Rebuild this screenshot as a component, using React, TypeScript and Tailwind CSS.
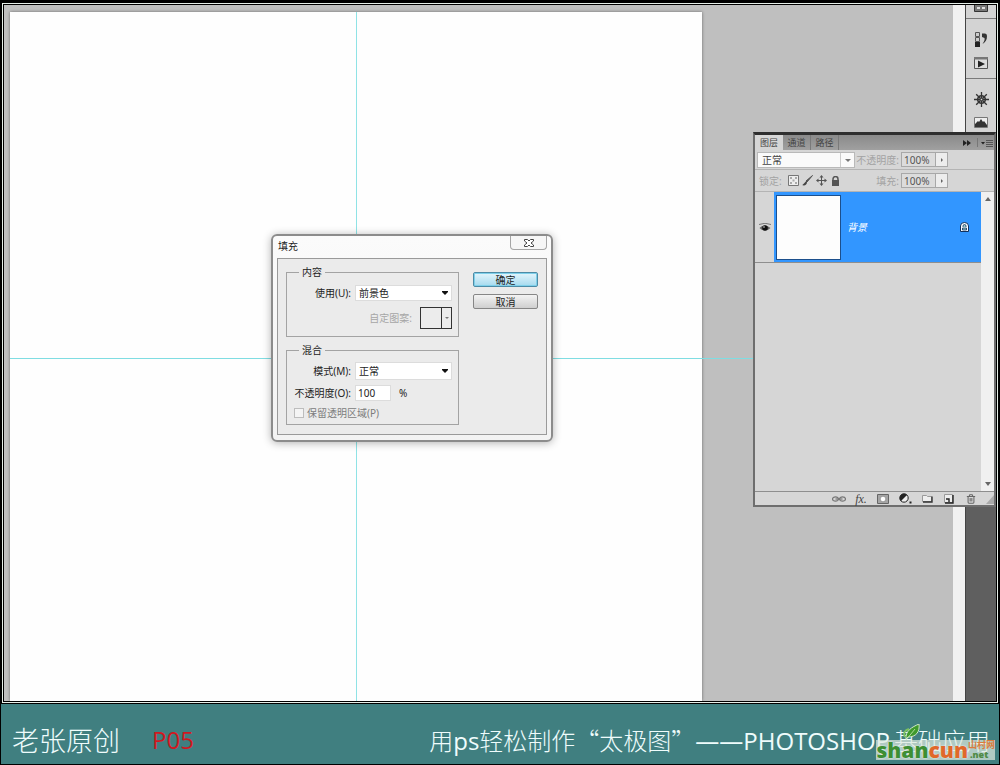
import React, { useState } from "react";
import { Trash2 } from "lucide-react";

const UI_FONT = "font-['Noto_Sans','Noto_Sans_CJK_SC',sans-serif]";

type SelectProps = {
  id: string;
  value: string;
  options: string[];
  className: string;
  onChange: (v: string) => void;
};

function DialogSelect({ id, value, options, className, onChange }: SelectProps) {
  return (
    <div className="relative flex">
      <select
        id={id}
        value={value}
        onChange={(e) => onChange(e.target.value)}
        className={`w-full appearance-none border border-[#dcdcdc] bg-white pl-[3px] outline-none ${className}`}
      >
        {options.map((o) => (
          <option key={o}>{o}</option>
        ))}
      </select>
      <svg viewBox="0 0 6 4" className="pointer-events-none absolute right-1 top-1/2 h-1 w-[6px] -translate-y-1/2">
        <path d="M0 0h6v1L3 4 0 1z" fill="#111" />
      </svg>
    </div>
  );
}

function FillDialog() {
  const [use, setUse] = useState("前景色");
  const [mode, setMode] = useState("正常");
  const [opacity, setOpacity] = useState("100");

  return (
    <div
      role="dialog"
      aria-labelledby="fill-title"
      className={`absolute left-[267px] top-[229px] w-[282px] rounded-md border-2 border-[#8c8c8c] bg-linear-to-b from-[#fbfbfb] to-[#f3f3f3] px-1 pb-[5px] text-[10px] leading-[14px] text-[#1c1c1c] shadow-[0_1px_8px_rgba(0,0,0,0.3)] ${UI_FONT}`}
    >
      <div className="flex h-[22px] items-start justify-between">
        <h2 id="fill-title" className="pl-px pt-[3px]">填充</h2>
        <button
          aria-label="关闭"
          className="flex h-[14px] w-[37px] items-center justify-center rounded-b border border-t-0 border-[#a5a5a5] bg-[#f6f6f6]"
        >
          <svg viewBox="0 0 10 8" className="h-2 w-[10px]" fill="#fff" stroke="#444" strokeWidth="1">
            <path d="M.5.500h3L5 2 6.500.500h3v1.500L7 4l2.500 2v1.500h-3L5 6 3.500 7.500h-3V6L3 4 .5 2z" />
          </svg>
        </button>
      </div>

      <div className="flex gap-[14px] border border-[#9a9a9a] bg-[#ebebeb] px-2 pb-[9px] pt-[6px]">
        <div className="flex w-[174px] flex-col gap-[6px]">
          <fieldset className="border border-[#a3a3a3] pb-[7px] pr-[6px]">
            <legend className="ml-3 px-[3px]">内容</legend>
            <div className="flex flex-col gap-[6px] pt-[6px]">
              <div className="grid grid-cols-[64px_1fr] items-center gap-1">
                <label htmlFor="use" className="text-right">使用(U):</label>
                <DialogSelect
                  id="use"
                  value={use}
                  options={["前景色", "背景色", "图案"]}
                  className="h-4"
                  onChange={setUse}
                />
              </div>
              <div className="flex h-[22px] items-center justify-end gap-2 text-[#a6a6a6]">
                <span>自定图案:</span>
                <button disabled aria-label="自定图案" className="flex h-[22px] w-8 border border-[#333] bg-[#ececec]">
                  <span className="h-full flex-1 border-r border-[#333]"></span>
                  <span className="flex h-full w-[9px] items-center justify-center">
                    <svg viewBox="0 0 4 2" className="h-[2px] w-1">
                      <path d="M0 0h4L2 2z" fill="#777" />
                    </svg>
                  </span>
                </button>
              </div>
            </div>
          </fieldset>

          <fieldset className="border border-[#a3a3a3] pb-1 pr-[6px]">
            <legend className="ml-3 px-[3px]">混合</legend>
            <div className="flex flex-col gap-[5px] pt-[5px]">
              <div className="grid grid-cols-[64px_1fr] items-center gap-1">
                <label htmlFor="mode" className="text-right">模式(M):</label>
                <DialogSelect
                  id="mode"
                  value={mode}
                  options={["正常", "溶解", "正片叠底"]}
                  className="h-[18px]"
                  onChange={setMode}
                />
              </div>
              <div className="grid grid-cols-[64px_36px_1fr] items-center gap-1">
                <label htmlFor="opacity" className="whitespace-nowrap text-right">不透明度(O):</label>
                <input
                  id="opacity"
                  type="text"
                  value={opacity}
                  onChange={(e) => setOpacity(e.target.value)}
                  className="h-4 w-full border border-[#dcdcdc] bg-white px-[2px] outline-none"
                />
                <span className="pl-1">%</span>
              </div>
              <label className="flex items-center gap-[3px] pl-[7px] text-[#7c7c7c]">
                <input type="checkbox" disabled className="h-[10px] w-[10px] appearance-none border border-[#bdbdbd] bg-[#f4f4f4]" />
                保留透明区域(P)
              </label>
            </div>
          </fieldset>
        </div>

        <div className="flex flex-1 flex-col gap-[7px] pt-[7px]">
          <button className="flex h-[15px] w-[65px] items-center justify-center rounded-xs border border-[#4d8ba6] bg-linear-to-b from-[#e4f5fc] to-[#a5daee] shadow-[inset_0_0_0_1px_#7fd0ea]">
            确定
          </button>
          <button className="flex h-[15px] w-[65px] items-center justify-center rounded-xs border border-[#868686] bg-linear-to-b from-[#f3f3f3] to-[#cfcfcf]">
            取消
          </button>
        </div>
      </div>
    </div>
  );
}

function PercentField({ id, label }: { id: string; label: string }) {
  return (
    <div className="flex items-center gap-[2px]">
      <label htmlFor={id} className="text-[#a3a3a3]">{label}</label>
      <div className="flex h-[15px] w-[47px] border border-[#a8a8a8]">
        <input id={id} disabled defaultValue="100%" className="w-0 flex-1 bg-[#dcdcdc] pl-[2px] text-[#555]" />
        <button disabled aria-label={label} className="flex w-3 items-center justify-center border-l border-[#a8a8a8] bg-[#ededed]">
          <svg viewBox="0 0 2 4" className="h-1 w-[2px]">
            <path d="M0 0l2 2-2 2z" fill="#666" />
          </svg>
        </button>
      </div>
    </div>
  );
}

function LayersPanel() {
  const iconBtn = "flex h-3 w-[14px] items-center justify-center";

  return (
    <section className={`absolute right-0 top-[127px] flex w-[243px] flex-col border-2 border-t-[3px] border-[#6e6e6e] border-t-[#2e2e2e] bg-[#d6d6d6] text-[10px] leading-[14px] text-[#444] ${UI_FONT}`}>
      <div className="flex h-[15px] items-stretch bg-linear-to-b from-[#8a8a8a] to-[#a0a0a0] text-[9px]">
        <button className="w-7 bg-[#d6d6d6]">图层</button>
        <button className="w-7 border-r border-[#7a7a7a]">通道</button>
        <button className="w-7 border-r border-[#7a7a7a]">路径</button>
        <svg viewBox="0 0 32 15" className="ml-auto h-[15px] w-8">
          <path d="M1 5l4 3-4 3zM5 5l4 3-4 3zM19 7h4l-2 2.500z" fill="#222" />
          <path d="M15.500 3v9" stroke="#777" />
          <path d="M24 5.500h7M24 7.500h7M24 9.500h7M24 11.500h7" stroke="#555" />
        </svg>
      </div>

      <div className="flex h-5 items-center justify-between border-b border-[#b4b4b4] pl-[2px] pr-[46px]">
        <div className="relative flex w-[98px]">
          <select aria-label="混合模式" className="h-4 w-full appearance-none border border-[#b9b9b9] bg-[#fafafa] pl-1 outline-none">
            <option>正常</option>
            <option>溶解</option>
          </select>
          <svg viewBox="0 0 15 14" className="pointer-events-none absolute right-0 top-[1px] h-[14px] w-[15px]">
            <path d="M.5 0v14" stroke="#ccc" />
            <path d="M5 6h6L8 9z" fill="#777" />
          </svg>
        </div>
        <PercentField id="layer-opacity" label="不透明度:" />
      </div>

      <div className="flex h-[22px] items-center border-b border-[#b4b4b4] pl-1 pr-[46px]">
        <span className="w-[27px] text-[#a3a3a3]">锁定:</span>
        <div className="flex items-center">
          <button aria-label="锁定透明像素" className={iconBtn}>
            <svg viewBox="0 0 11 11" className="h-[11px] w-[11px]">
              <path d="M.5.5h10v10H.5z" fill="#eee" stroke="#777" />
              <path d="M2 2h2v2H2zM7 2h2v2H7zM4.500 4.500h2v2h-2zM2 7h2v2H2zM7 7h2v2H7z" fill="#aaa" />
            </svg>
          </button>
          <button aria-label="锁定图像像素" className={iconBtn}>
            <svg viewBox="0 0 11 11" className="h-[11px] w-[11px]">
              <path d="M10.500.5L5 7 4 6z" fill="#555" stroke="#555" />
              <path d="M4.500 6.500C3 6 2.500 9 0 10c2.500 1 5 0 5-3z" fill="#444" />
            </svg>
          </button>
          <button aria-label="锁定位置" className={iconBtn}>
            <svg viewBox="0 0 11 11" className="h-[11px] w-[11px]">
              <path d="M5.500 1v9M1 5.500h9" stroke="#555" />
              <path d="M5.500 0l2 2.500h-4zM5.500 11l2-2.500h-4zM0 5.500l2.500-2v4zM11 5.500l-2.500-2v4z" fill="#555" />
            </svg>
          </button>
          <button aria-label="锁定全部" className={iconBtn}>
            <svg viewBox="0 0 9 10" className="h-[10px] w-[9px]">
              <path d="M2 5V3a2.500 2.500 0 0 1 5 0v2" fill="none" stroke="#555" strokeWidth="1.500" />
              <path d="M1 4h7v6H1z" fill="#555" />
            </svg>
          </button>
        </div>
        <div className="ml-auto">
          <PercentField id="layer-fill" label="填充:" />
        </div>
      </div>

      <div className="flex h-[299px]">
        <ul className="flex-1">
          <li className="flex h-[71px] items-stretch border-b border-[#8e8e8e]">
            <button aria-label="可见" className="flex w-[19px] items-center justify-center">
              <svg viewBox="0 0 12 9" className="h-[9px] w-3">
                <path d="M0 1.500Q6-1 12 1.500" fill="none" stroke="#777" />
                <path d="M.5 5Q6 0 11.500 5 6 10 .5 5z" fill="#666" />
                <circle cx="6" cy="5" r="2.800" fill="#111" />
                <circle cx="5" cy="4" r=".8" fill="#ddd" />
              </svg>
            </button>
            <div className="flex flex-1 items-center bg-[#3296ff] pl-[2px] pr-3">
              <div className="h-[65px] w-[65px] border border-[#1c4f8c] bg-[#fdfdfd]"></div>
              <span className="ml-[6px] text-white italic">背景</span>
              <svg viewBox="0 0 9 10" className="ml-auto h-[10px] w-[9px]">
                <path d="M.5 9.500V4a4 3.500 0 0 1 8 0v5.500z" fill="#fff" stroke="#10305c" />
                <path d="M3 5V4a1.500 1.500 0 0 1 3 0v1M2.500 6h4v2h-4z" fill="#9cc" stroke="#10305c" strokeWidth=".8" />
              </svg>
            </div>
          </li>
        </ul>
        <div className="flex w-[13px] flex-col items-center justify-between bg-[#f0f0f0] py-[5px]">
          <svg viewBox="0 0 6 4" className="h-1 w-[6px]"><path d="M0 4h6L3 0z" fill="#666" /></svg>
          <svg viewBox="0 0 6 4" className="h-1 w-[6px]"><path d="M0 0h6L3 4z" fill="#666" /></svg>
        </div>
      </div>

      <div className="flex h-[14px] items-center justify-end gap-2 border-t border-[#8e8e8e]">
        <button aria-label="链接图层" className={iconBtn}>
          <svg viewBox="0 0 14 8" className="h-2 w-[14px]" fill="none" stroke="#777" strokeWidth="1.200">
            <ellipse cx="3.500" cy="4" rx="3" ry="2.200" />
            <ellipse cx="10.500" cy="4" rx="3" ry="2.200" />
            <path d="M3.500 4h7" />
          </svg>
        </button>
        <button aria-label="图层样式" className={`${iconBtn} font-['Liberation_Serif',serif] text-[12px] italic text-[#444]`}>
          fx.
        </button>
        <button aria-label="图层蒙版" className={iconBtn}>
          <svg viewBox="0 0 12 10" className="h-[10px] w-3">
            <path d="M.5.5h11v9H.5z" fill="#a5a5a5" stroke="#666" />
            <circle cx="6" cy="5" r="2.800" fill="#fff" stroke="#777" strokeWidth=".6" />
          </svg>
        </button>
        <button aria-label="调整图层" className={iconBtn}>
          <svg viewBox="0 0 13 11" className="h-[11px] w-[13px]">
            <circle cx="5" cy="5" r="4.200" fill="#eee" stroke="#222" />
            <path d="M8 2A4.200 4.200 0 0 0 2 8z" fill="#222" />
            <path d="M10.500 8.500h2v2h-2z" fill="#222" />
          </svg>
        </button>
        <button aria-label="新建组" className={iconBtn}>
          <svg viewBox="0 0 11 9" className="h-[9px] w-[11px]">
            <path d="M.5 7.500v-6h4l1 1h4v5z" fill="#eee" stroke="#999" />
            <path d="M1 8h9V2.500" fill="none" stroke="#333" strokeWidth="1.400" />
          </svg>
        </button>
        <button aria-label="新建图层" className={iconBtn}>
          <svg viewBox="0 0 10 10" className="h-[10px] w-[10px]">
            <path d="M.5.5h8v8h-8z" fill="#eee" stroke="#999" />
            <path d="M9 1v8H1M5 8V5H2" fill="none" stroke="#222" strokeWidth="1.400" />
          </svg>
        </button>
        <button aria-label="删除图层" className={iconBtn}>
          <Trash2 size={10} color="#666" strokeWidth={2.5} />
        </button>
        <svg viewBox="0 0 8 10" className="h-[10px] w-2">
          <path d="M8 1v9H0z" fill="#aaa" />
        </svg>
      </div>
    </section>
  );
}

function Dock() {
  const group = "flex flex-col items-center border-b border-[#7a7a7a] bg-[#d3d3d3]";
  return (
    <aside className="border-l border-[#444] bg-[#5f5f5f]">
      <div className={`${group} h-[14px]`}>
        <svg viewBox="0 0 14 7" className="h-[7px] w-[14px]">
          <path d="M.5 0v6.500h13V0" fill="#777" stroke="#333" />
          <path d="M3 2h3v2H3zM8 2h3v2H8z" fill="#ddd" />
        </svg>
      </div>
      <div className={`${group} h-[60px] gap-[10px] pt-[13px]`}>
        {/* history */}
        <svg viewBox="0 0 14 15" className="h-[15px] w-[14px]">
          <path d="M1.500.5h4v4h-4zM1.500 5.500h4v4h-4z" fill="#ccc" stroke="#555" />
          <path d="M1 10h5v5H1z" fill="#222" />
          <path d="M8 1.500h3a2.500 2.500 0 0 1 2 2.500c0 4-1.500 6-4.500 8 1.500-2.500 2.500-4 2-6L8 5z" fill="#333" />
        </svg>
        {/* actions */}
        <svg viewBox="0 0 14 12" className="h-3 w-[14px]">
          <path d="M.5 1.500h13v10H.5z" fill="#ddd" stroke="#555" />
          <path d="M0 0h14v2.500H0z" fill="#777" />
          <path d="M4 3.500l7 3.500-7 3.500z" fill="#222" />
        </svg>
      </div>
      <div className={`${group} h-[56px] gap-[10px] pt-[13px]`}>
        {/* navigator wheel */}
        <svg viewBox="0 0 15 15" className="h-[15px] w-[15px]" fill="none" stroke="#333">
          <circle cx="7.500" cy="7.500" r="3.800" strokeWidth="1.600" />
          <path d="M7.500 0v15M0 7.500h15M2.200 2.200l10.600 10.600M12.800 2.200L2.200 12.800" strokeWidth="1.300" />
          <circle cx="7.500" cy="7.500" r="1.200" fill="#ddd" />
        </svg>
        {/* histogram */}
        <svg viewBox="0 0 14 11" className="h-[11px] w-[14px]">
          <path d="M.5.5h13v10H.5z" fill="#eee" stroke="#777" />
          <path d="M1 10V7l3-3 1 1 2-3 2 3 1-1 3 4v2z" fill="#333" />
        </svg>
      </div>
    </aside>
  );
}

function SiteLogo() {
  return (
    <div className="absolute bottom-1 right-1 flex items-end bg-[#dfe9df]/70 font-['Open_Sans',sans-serif] font-extrabold">
      <svg viewBox="0 0 18 17" className="absolute bottom-[19px] left-[27px] h-[17px] w-[18px]">
        <path d="M3 15C2 7 9 3 16 0c1 8-3 13-11 13z" fill="#3f9a2c" stroke="#cfe8c6" />
        <path d="M2 13C0 9 2 6 6 5" fill="none" stroke="#7cc25e" strokeWidth="2" />
        <path d="M3 16L12 5" stroke="#c8e8b0" strokeWidth=".8" />
      </svg>
      <span className="text-[21px] leading-[20px] text-[#3d8f34] [text-shadow:0_0_2px_#fff]">shan</span>
      <span className="text-[21px] leading-[20px] text-[#e0682a] [text-shadow:0_0_2px_#fff]">cun</span>
      <span className="flex flex-col text-[9px] leading-[10px]">
        <span className="font-['Noto_Sans_CJK_SC',sans-serif] font-bold text-[#dc7c3c]">山村网</span>
        <span className="pl-[2px] text-[#4f8a45]">.net</span>
      </span>
    </div>
  );
}

export default function App() {
  const latin = "font-['Open_Sans',sans-serif] font-normal";

  return (
    <div className="flex min-h-screen flex-col bg-black pb-px">
      <main className="flex flex-1 px-[2px] pb-px pt-[3px]">
        <div className="flex flex-1 border border-[#e6efe9]">
          <div className="relative grid flex-1 grid-cols-[692fr_251fr_12px_31px] overflow-hidden border border-black bg-[#bfbfbf] pl-[6px]">
            <div className="relative mt-[7px] bg-[#fefefe] shadow-[0_0_3px_rgba(0,0,0,0.45)]">
              <div className="absolute inset-y-0 left-1/2 w-px bg-[#8fe3e6]"></div>
            </div>
            <div></div>
            <div className="bg-[#f1f1f1]"></div>
            <Dock />
            <div className="absolute left-[6px] right-[243px] top-[353px] h-px bg-[#7fdde2]"></div>
            <FillDialog />
            <LayersPanel />
          </div>
        </div>
      </main>

      <footer className="relative mx-px flex h-[60px] items-center justify-between bg-[#407f80] pl-[11px] pr-[9px] pt-3 font-['Noto_Sans_CJK_SC',sans-serif] text-[24px] font-light leading-[32px] text-[#effcfc]">
        <p className="flex items-center gap-8">
          <span className="text-[27px]">老张原创</span>
          <span className={`${latin} text-[#d0181f]`}>P05</span>
        </p>
        <h1 className="whitespace-nowrap">
          用<span className={latin}>ps</span>轻松制作“太极图”
          <span className={`${latin} mr-1`}>——PHOTOSHOP</span>基础应用
        </h1>
        <SiteLogo />
      </footer>
    </div>
  );
}
